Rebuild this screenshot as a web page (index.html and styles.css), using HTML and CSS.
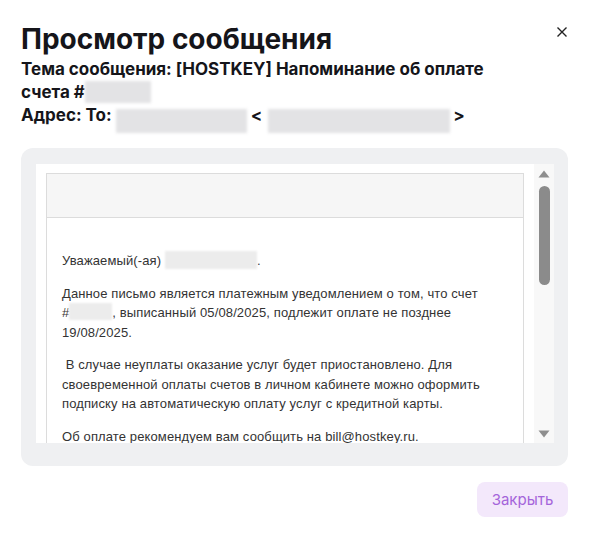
FILE: index.html
```html
<!DOCTYPE html>
<html lang="ru">
<head>
<meta charset="utf-8">
<link rel="stylesheet" href="styles.css">
</head>
<body>
<div class="modal">
  <div class="head">
    <div class="titles">
      <h1 class="title">Просмотр сообщения</h1>
      <div class="subject">Тема сообщения: [HOSTKEY] Напоминание об оплате счета #<span class="blur b-inv"></span></div>
      <div class="address">Адрес: To: <span class="blur b-name"></span> &lt;<span class="blur b-mail"></span>&gt;</div>
    </div>
    <button class="close" aria-label="Закрыть">
      <svg width="12" height="12" viewBox="0 0 12 12"><path d="M1.5 1.5L10.5 10.5M10.5 1.5L1.5 10.5" stroke="#222" stroke-width="1.4" fill="none"/></svg>
    </button>
  </div>
  <div class="panel">
    <div class="frame">
      <div class="content">
        <div class="mail">
          <div class="mail-head"></div>
          <div class="mail-body">
            <p>Уважаемый(-ая) <span class="blur b-cust"></span>.</p>
            <p>Данное письмо является платежным уведомлением о том, что счет #<span class="blur b-num"></span>, выписанный 05/08/2025, подлежит оплате не позднее 19/08/2025.</p>
            <p>&nbsp;В случае неуплаты оказание услуг будет приостановлено. Для своевременной оплаты счетов в личном кабинете можно оформить подписку на автоматическую оплату услуг с кредитной карты.</p>
            <p>Об оплате рекомендуем вам сообщить на bill@hostkey.ru.</p>
          </div>
        </div>
      </div>
      <div class="scrollbar">
        <svg class="arrow" width="12" height="8" viewBox="0 0 12 8"><path d="M6 0.5L11.5 7.5H0.5Z" fill="#8e8e8e"/></svg>
        <div class="track"><div class="thumb"></div></div>
        <svg class="arrow" width="12" height="8" viewBox="0 0 12 8"><path d="M0.5 0.5H11.5L6 7.5Z" fill="#8e8e8e"/></svg>
      </div>
    </div>
  </div>
  <div class="footer">
    <button class="btn">Закрыть</button>
  </div>
</div>
</body>
</html>
```

FILE: styles.css
```css
* { box-sizing: border-box; }
html, body { margin: 0; padding: 0; background: #fff; }
body { font-family: Inter, Roboto, "Noto Sans", sans-serif; color: #1b1b1f; }

.modal { width: 590px; height: 535px; padding: 20px 22px 0 21px; }

.head { display: flex; justify-content: space-between; align-items: flex-start; }
.titles { width: 505px; }
.title { margin: 0; font-size: 28px; line-height: 38px; font-weight: 700; color: #15151a; letter-spacing: 0; }
.subject, .address { font-size: 17px; font-weight: 700; line-height: 23px; color: #15151a; }
.address { margin-top: 0; }

.close { border: 0; background: none; padding: 0; width: 14px; height: 14px; margin-top: 5px; margin-right: -1px; cursor: pointer; display: flex; align-items: center; justify-content: center; }

.blur { display: inline-block; vertical-align: baseline; background: #e3e3e5; filter: blur(1.5px); }
.b-inv { width: 66px; height: 22px; margin-bottom: -5px; }
.b-name { width: 131px; height: 24px; margin-bottom: -12px; }
.b-mail { width: 182px; height: 24px; margin: 0 3px -12px 6px; }

.panel { margin-top: 21px; background: #eff0f2; border-radius: 12px; padding: 16px 14px 22px 15px; height: 318px; }
.frame { display: flex; background: #fff; height: 279px; overflow: hidden; }
.content { flex: 1; padding: 9px 10px 0 10px; overflow: hidden; }
.mail { border: 1px solid #dcdcdc; border-bottom: 0; height: 100%; }
.mail-head { height: 44px; background: #f6f6f6; border-bottom: 1px solid #dcdcdc; }
.mail-body { padding: 33px 38px 0 15px; font-family: "Liberation Sans", Arial, sans-serif; font-size: 13px; line-height: 19.5px; color: #333; letter-spacing: 0.12px; }
.mail-body p { margin: 0 0 13px; }
.b-cust { width: 92px; height: 18px; background: #ececec; filter: blur(0.8px); margin-bottom: -4px; }
.b-num { width: 43px; height: 17px; background: #ececec; filter: blur(0.8px); margin-bottom: -3px; }

.scrollbar { width: 20px; background: #f8f8f8; display: flex; flex-direction: column; align-items: center; padding: 6px 0 5px; }
.arrow { flex: none; }
.track { flex: 1; width: 100%; display: flex; justify-content: center; padding-top: 8px; }
.thumb { width: 11px; height: 99px; background: #8b8b8b; border-radius: 6px; }

.footer { display: flex; justify-content: flex-end; margin-top: 16px; }
.btn { width: 91px; height: 35px; border: 0; border-radius: 8px; background: #f3e8fb; color: #a464da; font-family: Inter, Roboto, "Noto Sans", sans-serif; font-size: 15px; cursor: pointer; }
```
